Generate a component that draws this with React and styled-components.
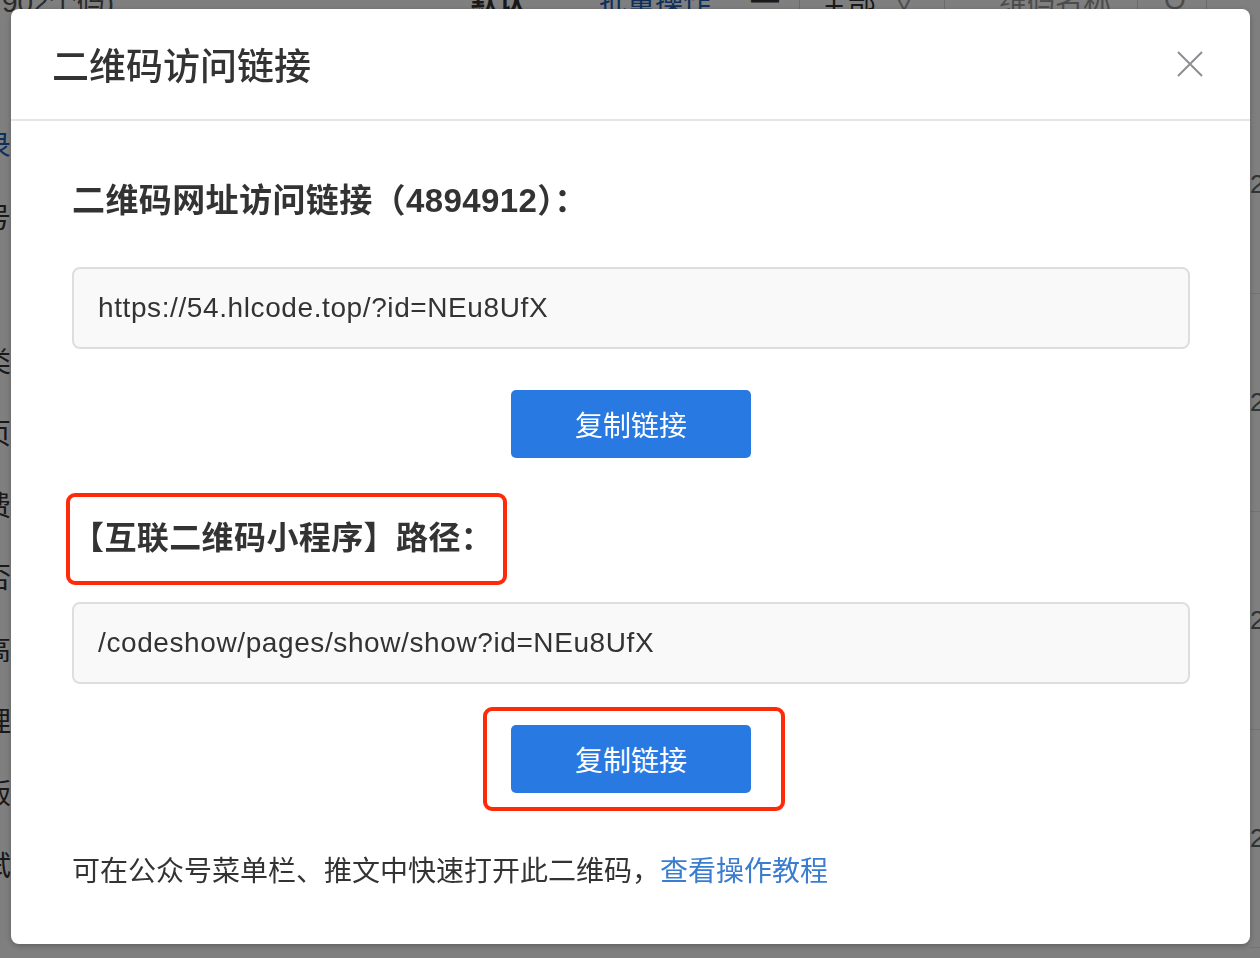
import styled, { createGlobalStyle } from "styled-components";

const sans = `"Liberation Sans", "Helvetica Neue", Arial, "Noto Sans CJK SC", sans-serif`;

const GlobalStyle = createGlobalStyle`
  html, body {
    margin: 0;
    padding: 0;
    background: #ffffff;
    font-family: ${sans};
    color: #333333;
  }
`;

/* page behind the dialog */
const Page = styled.div`
  width: 1260px;
  height: 958px;
  overflow: hidden;
  background: #ffffff;
`;
const TopBar = styled.div`
  height: 40px;
  margin-top: -20px;
  display: flex;
  align-items: center;
  font-size: 28px;
  color: #333;
`;
const Count = styled.span`
  width: 468px;
  padding-left: 2px;
  color: #555;
`;
const TabBold = styled.span`
  font-weight: 700;
  margin-right: 73px;
`;
const TabLink = styled.span`
  color: #1f5fb8;
  margin-right: 40px;
`;
const Divider = styled.span`
  width: 1px;
  height: 40px;
  background: #d8d8d8;
  margin: 0 ${(p) => p.$gap || 26}px;
`;
const Muted = styled.span`
  color: #999;
`;
const Rows = styled.div`
  display: flex;
  justify-content: space-between;
`;
const SideCol = styled.div`
  margin-left: -17px;
  padding-top: 88px;
  display: flex;
  flex-direction: column;
`;
const SideItem = styled.div`
  height: 72px;
  display: flex;
  align-items: center;
  font-size: 28px;
  color: ${(p) => (p.$active ? "#1f5fb8" : "#333")};
`;
const RightCol = styled.div`
  margin-right: -14px;
  padding-top: 56px;
  display: flex;
  flex-direction: column;
`;
const RightItem = styled.div`
  height: 218px;
  width: 24px;
  display: flex;
  align-items: center;
  font-size: 26px;
  color: #666;
  border-bottom: 1px solid #e6e6e6;
  box-sizing: border-box;
`;

/* dialog */
const Overlay = styled.div`
  position: fixed;
  inset: 0;
  background: rgba(0, 0, 0, 0.5);
`;
const Dialog = styled.div`
  margin: 9px 0 0 11px;
  width: 1239px;
  height: 935px;
  background: #ffffff;
  border-radius: 8px;
  box-shadow: 0 2px 6px rgba(0, 0, 0, 0.25);
  display: flex;
  flex-direction: column;
  overflow: hidden;
`;
const Header = styled.div`
  height: 110px;
  flex-shrink: 0;
  display: flex;
  align-items: center;
  justify-content: space-between;
  padding: 0 46px 0 41px;
  border-bottom: 2px solid #e6e6e6;
`;
const DialogTitle = styled.h2`
  margin: 0;
  font-size: 37px;
  font-weight: 500;
  color: #333;
  font-family: "Noto Sans CJK SC", sans-serif;
`;
const CloseBtn = styled.button`
  width: 28px;
  height: 28px;
  border: 0;
  padding: 0;
  background: none;
  display: flex;
  align-items: center;
  justify-content: center;
`;
const Body = styled.div`
  padding: 58px 60px 0 61px;
  display: flex;
  flex-direction: column;
`;
const SectionTitle = styled.div`
  position: relative;
  align-self: flex-start;
  font-size: ${(p) => p.$size || 33}px;
  line-height: 44px;
  letter-spacing: 0.4px;
  font-weight: 700;
  color: #333;
  margin-top: ${(p) => p.$top || 0}px;
`;
const Mark = styled.span`
  position: relative;
  display: inline-block;
  &::after {
    content: "";
    position: absolute;
    top: ${(p) => p.$t}px;
    bottom: ${(p) => p.$b}px;
    left: ${(p) => p.$l}px;
    right: ${(p) => p.$r}px;
    border: 4px solid #ff2a0a;
    border-radius: 9px;
    pointer-events: none;
  }
`;
const LinkBox = styled.div`
  margin-top: ${(p) => p.$top}px;
  height: 82px;
  box-sizing: border-box;
  background: #f9f9f9;
  border: 2px solid #dedede;
  border-radius: 8px;
  display: flex;
  align-items: center;
  padding-left: 24px;
  font-size: 28px;
  letter-spacing: 0.6px;
  color: #333;
`;
const BtnRow = styled.div`
  margin-top: 41px;
  display: flex;
  justify-content: center;
`;
const CopyBtn = styled.button`
  width: 240px;
  height: 68px;
  border: 0;
  border-radius: 5px;
  background: #2979e2;
  color: #ffffff;
  font-size: 28px;
  font-family: "Noto Sans CJK SC", sans-serif;
  font-weight: 400;
`;
const Note = styled.p`
  margin: 56px 0 0;
  font-size: 28px;
  line-height: 40px;
  color: #333;
  font-family: "Noto Sans CJK SC", sans-serif;
`;
const NoteLink = styled.a`
  color: #3a7dd0;
  text-decoration: none;
`;

export default function App() {
  const side = ["录", "号", "", "类", "页", "费", "否", "高", "理", "版", "试"];
  return (
    <>
      <GlobalStyle />
      <Page>
        <TopBar>
          <Count>902个码)</Count>
          <TabBold>默认</TabBold>
          <TabLink>批量操作</TabLink>
          <span>━</span>
          <Divider $gap={20} />
          <span>全部</span>
          <Muted style={{ marginLeft: 14 }}>∨</Muted>
          <Divider />
          <Muted>二维码名称</Muted>
          <Divider />
          <Muted>Q</Muted>
          <Divider $gap={20} />
        </TopBar>
        <Rows>
          <SideCol>
            {side.map((c, i) => (
              <SideItem key={i} $active={i === 0}>
                {c}
              </SideItem>
            ))}
          </SideCol>
          <RightCol>
            {[0, 1, 2, 3].map((i) => (
              <RightItem key={i}>2</RightItem>
            ))}
          </RightCol>
        </Rows>
      </Page>

      <Overlay>
        <Dialog>
          <Header>
            <DialogTitle>二维码访问链接</DialogTitle>
            <CloseBtn aria-label="关闭">
              <svg width="26" height="26" viewBox="0 0 26 26">
                <path
                  d="M1 1 L25 25 M25 1 L1 25"
                  stroke="#8e8e93"
                  strokeWidth="2"
                  fill="none"
                />
              </svg>
            </CloseBtn>
          </Header>
          <Body>
            <SectionTitle>二维码网址访问链接（4894912）：</SectionTitle>
            <LinkBox $top={44}>https://54.hlcode.top/?id=NEu8UfX</LinkBox>
            <BtnRow>
              <CopyBtn>复制链接</CopyBtn>
            </BtnRow>
            <SectionTitle $top={58} $size={32}>
              <Mark $t={-23} $b={-25} $l={-6} $r={-14}>
                【互联二维码小程序】路径：
              </Mark>
            </SectionTitle>
            <LinkBox $top={42}>/codeshow/pages/show/show?id=NEu8UfX</LinkBox>
            <BtnRow>
              <Mark $t={-18} $b={-18} $l={-28} $r={-34}>
                <CopyBtn>复制链接</CopyBtn>
              </Mark>
            </BtnRow>
            <Note>
              可在公众号菜单栏、推文中快速打开此二维码，
              <NoteLink href="#">查看操作教程</NoteLink>
            </Note>
          </Body>
        </Dialog>
      </Overlay>
    </>
  );
}
